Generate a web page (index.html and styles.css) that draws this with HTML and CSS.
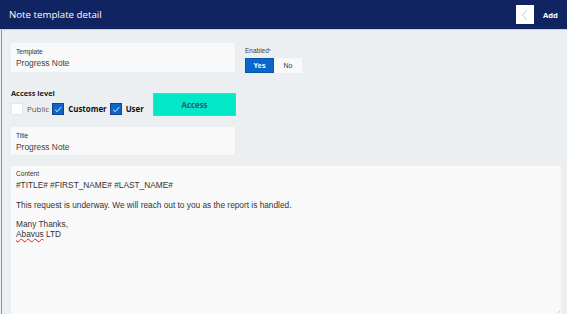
FILE: index.html
```html
<!DOCTYPE html>
<html lang="en">
<head>
    <meta charset="UTF-8">
    <title>Note template detail</title>
    <link rel="stylesheet" href="styles.css">
</head>
<body>
    <div class="topbar">
        <span class="topbar-title">Note template detail</span>
        <div class="topbar-actions">
            <button class="back-btn" aria-label="Back">
                <svg width="8" height="12" viewBox="0 0 8 12"><path d="M6 1 L1.5 6 L6 11" fill="none" stroke="#c8ccd6" stroke-width="1"/></svg>
            </button>
            <span class="add-btn">Add</span>
        </div>
    </div>

    <div class="page">
        <div class="row">
            <div class="field">
                <label>Template</label>
                <div class="field-value">Progress Note</div>
            </div>
            <div class="enabled">
                <label>Enabled<span class="req">*</span></label>
                <div class="toggle">
                    <span class="opt on">Yes</span>
                    <span class="opt">No</span>
                </div>
            </div>
        </div>

        <div class="access-row">
            <div class="access-level">
                <div class="group-label">Access level</div>
                <div class="checks">
                    <span class="check"></span><span class="check-text">Public</span>
                    <span class="check checked"><svg width="11" height="11" viewBox="0 0 12 12"><path d="M2.5 6.2 L5 8.6 L9.8 3.2" fill="none" stroke="#fff" stroke-width="1.1"/></svg></span><span class="check-text strong">Customer</span>
                    <span class="check checked"><svg width="11" height="11" viewBox="0 0 12 12"><path d="M2.5 6.2 L5 8.6 L9.8 3.2" fill="none" stroke="#fff" stroke-width="1.1"/></svg></span><span class="check-text strong">User</span>
                </div>
            </div>
            <button class="access-btn">Access</button>
        </div>

        <div class="field">
            <label>Title</label>
            <div class="field-value">Progress Note</div>
        </div>

        <div class="content-box">
            <label>Content</label>
            <div class="content-text">
                <p>#TITLE# #FIRST_NAME# #LAST_NAME#</p>
                <p>This request is underway. We will reach out to you as the report is handled.</p>
                <p>Many Thanks,<br><span class="spell">Abavus</span> LTD</p>
            </div>
            <span class="grip"></span>
        </div>
    </div>
</body>
</html>
```

FILE: styles.css
```css
html, body { margin: 0; height: 100%; }
body {
    background: #eceff2;
    font-family: 'Liberation Sans', Arial, sans-serif;
    color: #333;
    overflow: hidden;
}
.topbar {
    height: 29px;
    background: #0f2461;
    display: flex;
    align-items: center;
    justify-content: space-between;
    padding: 0 0 0 9px;
    border-bottom: 1px solid #c9ced8;
}
.topbar-title {
    color: #fff;
    font-family: 'Open Sans', sans-serif;
    font-size: 9.7px;
}
.topbar-actions { display: flex; align-items: center; gap: 9px; padding-right: 9px; }
.back-btn {
    width: 18px;
    height: 19px;
    background: #fff;
    border: none;
    padding: 0;
    display: flex;
    align-items: center;
    justify-content: center;
}
.add-btn {
    color: #fff;
    font-family: 'Open Sans', sans-serif;
    font-weight: bold;
    font-size: 7.7px;
}
.page {
    border-left: 1px solid #8c93ab;
    margin-left: 1px;
    padding: 13px 6px 0 9px;
    height: calc(100% - 30px);
    box-sizing: border-box;
    overflow: hidden;
}
.row { display: flex; gap: 10px; }
.field {
    width: 224px;
    height: 29px;
    background: #f9f9f9;
    box-sizing: border-box;
    padding: 5px 5px 0 5px;
}
.field label, .content-box label {
    display: block;
    font-size: 6.6px;
    color: #333;
    line-height: 8px;
}
.field-value { font-size: 8.4px; line-height: 11px; color: #444; margin-top: 2px; }
.enabled label {
    display: block;
    font-size: 6.5px;
    color: #444;
    margin-top: 3px;
    line-height: 10px;
}
.req { color: #e02020; font-size: 5px; vertical-align: top; }
.toggle { display: flex; margin-top: 2px; }
.opt {
    width: 28px;
    height: 15px;
    display: flex;
    align-items: center;
    justify-content: center;
    font-size: 7px;
    background: #f9f9f9;
    color: #333;
}
.opt.on { width: 29px; background: #0a66c8; color: #fff; font-weight: bold; border: 1px solid #0a55a8; box-sizing: border-box; }
.access-row { display: flex; gap: 10px; margin-top: 15px; align-items: flex-start; }
.access-level { width: 132px; flex-shrink: 0; }
.group-label {
    font-family: 'Open Sans', sans-serif;
    font-weight: bold;
    font-size: 7.4px;
    color: #222;
    line-height: 10px;
}
.checks { display: flex; align-items: center; margin-top: 5px; white-space: nowrap; }
.check {
    flex-shrink: 0;
    width: 12px;
    height: 12px;
    box-sizing: border-box;
    background: #fff;
    border: 1px solid #e2e5ea;
    display: inline-flex;
    align-items: center;
    justify-content: center;
}
.check.checked { background: #0a66c8; border-color: #1c3f8a; }
.check-text {
    font-family: 'Open Sans', sans-serif;
    font-size: 7.9px;
    color: #555;
    margin: 0 3px 0 4px;
}
.check-text.strong { font-weight: bold; color: #111; }
.access-btn {
    width: 83px;
    height: 23px;
    margin-top: 5px;
    background: #00e8c8;
    border: 1px solid #30e0cc;
    font-family: 'Open Sans', sans-serif;
    font-weight: bold;
    font-size: 7.9px;
    color: #2d5c5a;
}
.page > .field { margin-top: 11px; height: 28px; }
.content-box {
    position: relative;
    margin-top: 11px;
    background: #f9f9f9;
    height: 148px;
    box-sizing: border-box;
    padding: 4px 5px 0 5px;
}
.content-text { font-size: 8.3px; color: #333; line-height: 10px; margin-top: 2px; }
.content-text p { margin: 0 0 9.5px; }
.spell { text-decoration: underline wavy #e02020; text-decoration-thickness: 1px; }
.grip {
    position: absolute;
    right: 1px;
    bottom: 1px;
    width: 5px;
    height: 5px;
    background: linear-gradient(135deg, transparent 50%, #999 50%, transparent 60%, transparent 75%, #999 75%, transparent 85%);
}
```
